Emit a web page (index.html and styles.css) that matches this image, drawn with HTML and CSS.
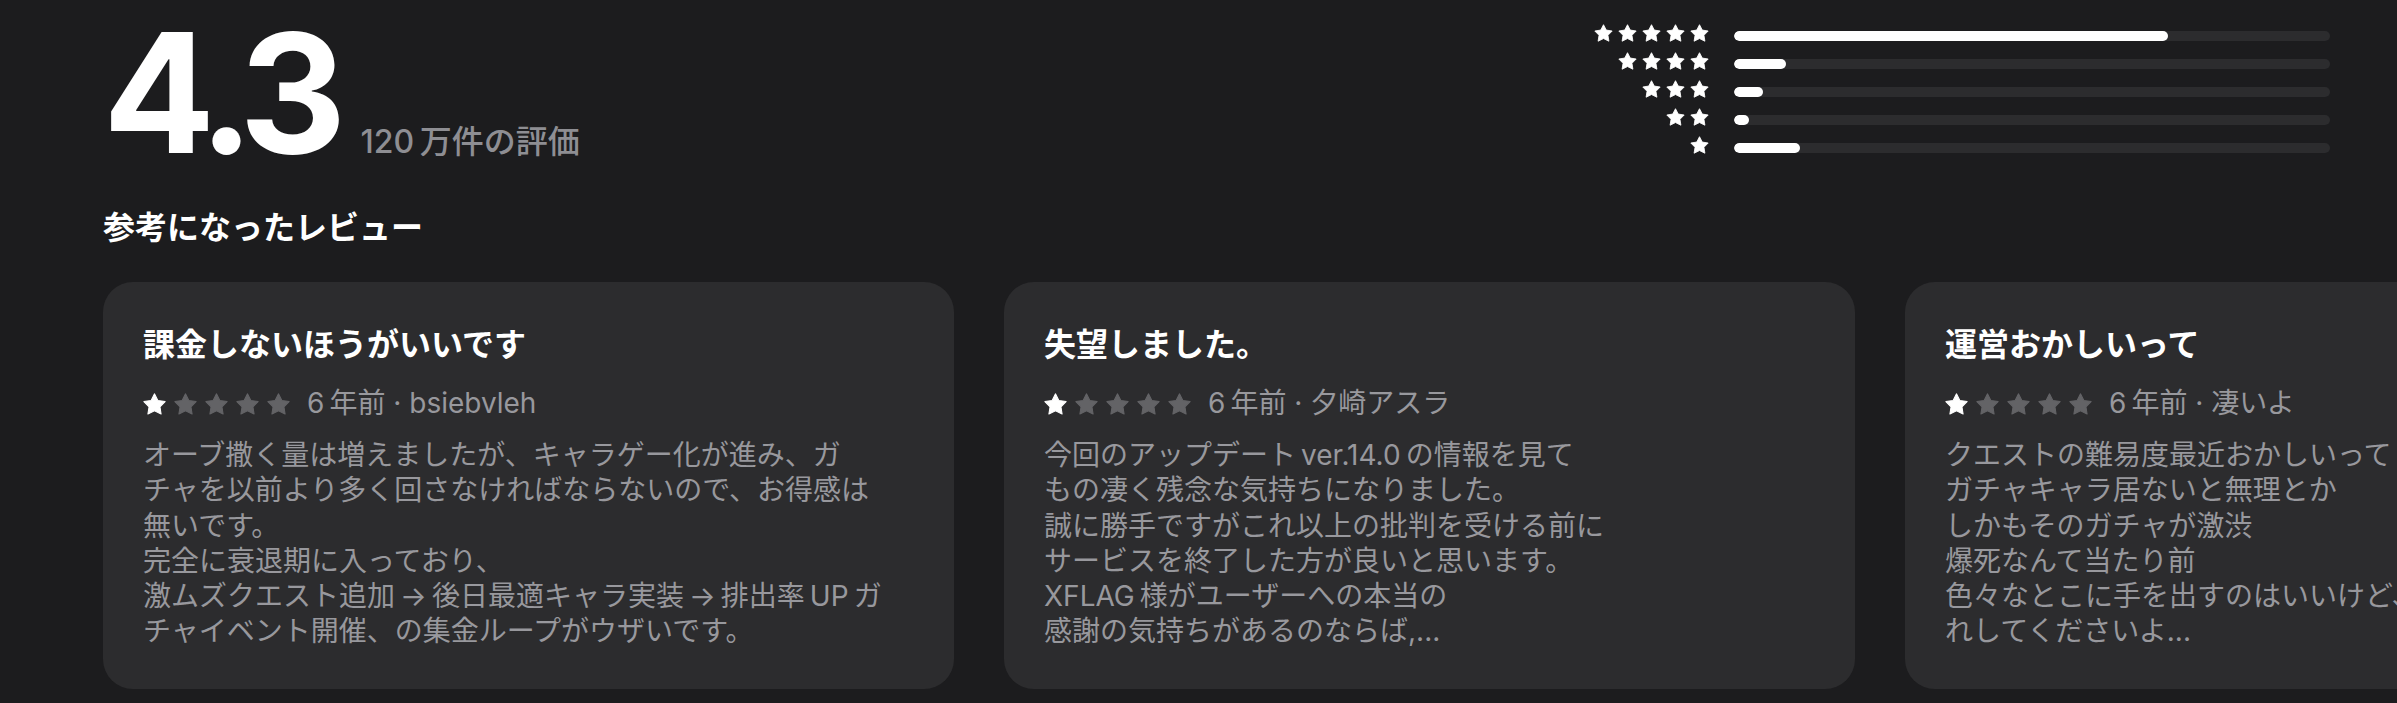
FILE: index.html
```html
<!DOCTYPE html>
<html lang="ja">
<head>
<meta charset="utf-8">
<title>評価とレビュー</title>
<link rel="stylesheet" href="styles.css">
</head>
<body>
<svg class="defs" width="0" height="0" aria-hidden="true">
  <symbol id="star" viewBox="0 0 24 23">
    <path d="M12 0.9L15.53 7.75L23.1 8.95L17.71 14.45L18.9 22L12 18.6L5.1 22L6.29 14.45L0.9 8.95L8.47 7.75Z" stroke-width="1.1" stroke-linejoin="round"/>
  </symbol>
</svg>
<main class="page">
  <section class="summary">
    <div class="score">
      <span class="score-value">4.3</span>
      <span class="score-count">120&#8201;万件の評価</span>
    </div>
    <div class="hist">
      <div class="hist-stars"><svg><use href="#star"/></svg><svg><use href="#star"/></svg><svg><use href="#star"/></svg><svg><use href="#star"/></svg><svg><use href="#star"/></svg></div>
      <div class="track"><div class="fill" style="width:72.8%"></div></div>
      <div class="hist-stars"><svg><use href="#star"/></svg><svg><use href="#star"/></svg><svg><use href="#star"/></svg><svg><use href="#star"/></svg></div>
      <div class="track"><div class="fill" style="width:8.7%"></div></div>
      <div class="hist-stars"><svg><use href="#star"/></svg><svg><use href="#star"/></svg><svg><use href="#star"/></svg></div>
      <div class="track"><div class="fill" style="width:4.9%"></div></div>
      <div class="hist-stars"><svg><use href="#star"/></svg><svg><use href="#star"/></svg></div>
      <div class="track"><div class="fill" style="width:2.5%"></div></div>
      <div class="hist-stars"><svg><use href="#star"/></svg></div>
      <div class="track"><div class="fill" style="width:11.1%"></div></div>
    </div>
  </section>

  <h2 class="section-title">参考になったレビュー</h2>

  <div class="reviews">
    <article class="card">
      <h3 class="card-title">課金しないほうがいいです</h3>
      <div class="meta">
        <span class="stars"><svg class="on"><use href="#star"/></svg><svg><use href="#star"/></svg><svg><use href="#star"/></svg><svg><use href="#star"/></svg><svg><use href="#star"/></svg></span>
        <span class="meta-text">6&#8201;年前 · bsiebvleh</span>
      </div>
      <p class="body">オーブ撒く量は増えましたが、キャラゲー化が進み、ガ<br>チャを以前より多く回さなければならないので、お得感は<br>無いです。<br>完全に衰退期に入っており、<br>激ムズクエスト追加&#8201;→&#8201;後日最適キャラ実装&#8201;→&#8201;排出率&#8201;UP&#8201;ガ<br>チャイベント開催、の集金ループがウザいです。</p>
    </article>
    <article class="card">
      <h3 class="card-title">失望しました。</h3>
      <div class="meta">
        <span class="stars"><svg class="on"><use href="#star"/></svg><svg><use href="#star"/></svg><svg><use href="#star"/></svg><svg><use href="#star"/></svg><svg><use href="#star"/></svg></span>
        <span class="meta-text">6&#8201;年前 · 夕崎アスラ</span>
      </div>
      <p class="body">今回のアップデート&#8201;ver.14.0&#8201;の情報を見て<br>もの凄く残念な気持ちになりました。<br>誠に勝手ですがこれ以上の批判を受ける前に<br>サービスを終了した方が良いと思います。<br>XFLAG&#8201;様がユーザーへの本当の<br>感謝の気持ちがあるのならば,...</p>
    </article>
    <article class="card">
      <h3 class="card-title">運営おかしいって</h3>
      <div class="meta">
        <span class="stars"><svg class="on"><use href="#star"/></svg><svg><use href="#star"/></svg><svg><use href="#star"/></svg><svg><use href="#star"/></svg><svg><use href="#star"/></svg></span>
        <span class="meta-text">6&#8201;年前 · 凄いよ</span>
      </div>
      <p class="body">クエストの難易度最近おかしいって<br>ガチャキャラ居ないと無理とか<br>しかもそのガチャが激渋<br>爆死なんて当たり前<br>色々なとこに手を出すのはいいけど、ちゃんと手入<br>れしてくださいよ...</p>
    </article>
  </div>
</main>
</body>
</html>
```

FILE: styles.css
```css
html, body {
  margin: 0;
  padding: 0;
  background: #1c1c1e;
  overflow: hidden;
}

body {
  font-family: Inter, "Noto Sans CJK JP", sans-serif;
  color: #ffffff;
}

.defs {
  position: absolute;
  width: 0;
  height: 0;
}

.page {
  padding-left: 103px;
  width: 2500px;
}

.summary {
  display: flex;
  justify-content: space-between;
  align-items: flex-start;
  width: 2227px;
}

.score {
  display: flex;
  align-items: baseline;
  margin-top: 10px;
}

.score-value {
  font-size: 166px;
  line-height: 166px;
  font-weight: 700;
  letter-spacing: -11px;
  padding-right: 11px;
  color: #ffffff;
}

.score-count {
  margin-left: 14px;
  font-size: 32px;
  font-weight: 500;
  color: #8e8e93;
}

.hist {
  display: grid;
  grid-template-columns: auto 596px;
  column-gap: 25px;
  row-gap: 10px;
  margin-top: 24px;
}

.hist-stars {
  display: flex;
  justify-content: flex-end;
  gap: 5px;
  height: 18px;
}

.hist-stars svg {
  width: 19px;
  height: 18px;
  fill: #ffffff;
  stroke: #ffffff;
}

.track {
  height: 10px;
  margin-top: 7px;
  border-radius: 5px;
  background: #2c2c2e;
  overflow: hidden;
}

.fill {
  height: 100%;
  min-width: 10px;
  border-radius: 5px;
  background: #ffffff;
}

.section-title {
  margin: 32px 0 0;
  font-size: 32px;
  line-height: 40px;
  font-weight: 700;
  color: #ffffff;
}

.reviews {
  display: flex;
  gap: 50px;
  margin-top: 34px;
}

.card {
  flex: 0 0 auto;
  width: 851px;
  box-sizing: border-box;
  padding: 43px 40px 39px;
  border-radius: 30px;
  background: #2c2c2e;
}

.card-title {
  margin: 0;
  font-size: 32px;
  line-height: 40px;
  font-weight: 700;
  color: #ffffff;
  white-space: nowrap;
}

.meta {
  display: flex;
  align-items: center;
  margin-top: 20px;
  height: 36px;
}

.stars {
  display: flex;
  gap: 8px;
  margin-top: 2px;
}

.stars svg {
  width: 23px;
  height: 22px;
  fill: #636366;
  stroke: #636366;
}

.stars svg.on {
  fill: #ffffff;
  stroke: #ffffff;
}

.meta-text {
  margin-left: 17px;
  font-size: 28px;
  line-height: 36px;
  color: #98989d;
  white-space: nowrap;
}

.body {
  margin: 17px 0 0;
  font-size: 28px;
  line-height: 35.3px;
  color: #98989d;
  white-space: nowrap;
}
```
